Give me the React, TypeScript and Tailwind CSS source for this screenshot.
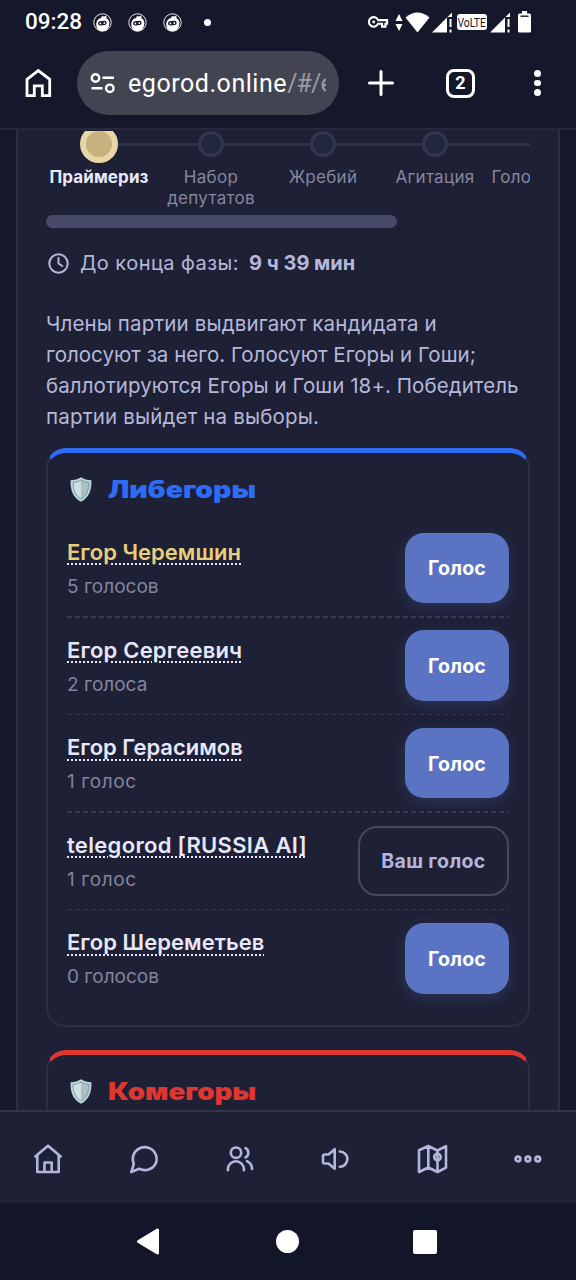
import { clsx } from "clsx";

// Types
interface Candidate {
  name: string;
  votes: string;
  leader?: boolean;
  mine?: boolean;
  nameClass: string;
  votesClass: string;
}

const candidates: Candidate[] = [
  { name: "Егор Черемшин", votes: "5 голосов", leader: true, nameClass: "tracking-[0.03px]", votesClass: "tracking-normal" },
  { name: "Егор Сергеевич", votes: "2 голоса", nameClass: "tracking-[0.18px]", votesClass: "tracking-normal" },
  { name: "Егор Герасимов", votes: "1 голос", nameClass: "tracking-normal", votesClass: "tracking-[0.6px]" },
  { name: "telegorod [RUSSIA AI]", votes: "1 голос", mine: true, nameClass: "tracking-[0.32px]", votesClass: "tracking-[0.6px]" },
  { name: "Егор Шереметьев", votes: "0 голосов", nameClass: "tracking-[0.05px]", votesClass: "tracking-normal" },
];

const steps = ["Праймериз", "Набор депутатов", "Жребий", "Агитация", "Голосование"];

const description = [
  { text: "Члены партии выдвигают кандидата и", className: "tracking-[0.13px]" },
  { text: "голосуют за него. Голосуют Егоры и Гоши;", className: "tracking-[0.03px]" },
  { text: "баллотируются Егоры и Гоши 18+. Победитель", className: "tracking-[0.07px]" },
  { text: "партии выйдет на выборы.", className: "tracking-[0.17px]" },
];

function BotIcon() {
  return (
    <svg width="19" height="19" viewBox="0 0 19 19">
      <circle cx="9.5" cy="9.5" r="8.7" fill="none" stroke="#fff" strokeWidth="0.9" />
      <path d="M3.3 12.2C3.1 7.6 5.6 5.3 8.2 5L8.8 3l2.4.5L13.2 2.5l.4 2.8c2.5 1.4 3.4 4.4 2.5 6.9-.5 3.4-2.9 5.9-6.3 6-3.7.1-6.3-2.4-6.5-6z" fill="#fff" />
      <rect x="5" y="8" width="8.6" height="4.2" rx="2" fill="#15172a" transform="rotate(-8 9.5 10)" />
      <circle cx="7.4" cy="10.5" r="0.9" fill="#fff" />
      <circle cx="11.3" cy="10" r="0.9" fill="#fff" />
    </svg>
  );
}

function SignalIcon() {
  return (
    <svg width="21" height="21" viewBox="0 0 21 21">
      <path d="M0 20.5L20 .5v4.5h-5v15.5z" fill="#fff" />
      <path d="M17.5 7h2v8h-2zM17.5 17.5h2v3h-2z" fill="#fff" />
    </svg>
  );
}

function StatusBar() {
  return (
    <div className="flex h-11 items-center pl-[25px] font-['Roboto',sans-serif] text-white">
      <span className="w-[68px] text-[22.5px] font-medium">09:28</span>
      <div className="flex gap-4">
        <BotIcon />
        <BotIcon />
        <BotIcon />
      </div>
      <span className="ml-[22px] size-[7px] rounded-full bg-white" />

      <div className="ml-[157px] flex items-center">
        <svg width="21" height="14" viewBox="0 0 22 14" fill="none" stroke="#fff" strokeWidth="2.2">
          <path d="M10.6 5H20v3.8h-1.7v3h-3.6v-3h-4.1A5 5 0 1 1 10.6 5z" />
          <circle cx="6" cy="7" r="1.1" fill="#fff" strokeWidth="1" />
        </svg>
        <svg className="ml-[6px]" width="8" height="17" viewBox="0 0 8 17" fill="#fff">
          <path d="M4 0l3.5 7h-7zM4 17L.5 10h7z" />
        </svg>
        <svg className="ml-[2px]" width="25" height="21" viewBox="0 0 25 21">
          <path d="M0.5 5.5Q12.5-4.3 24.5 5.5L12.5 20.5z" fill="#fff" />
        </svg>
        <div className="ml-[2px]">
          <SignalIcon />
        </div>
        <div className="ml-[4px] flex h-4 w-[30px] items-center justify-center rounded-[3px] bg-white">
          <span className="scale-x-[0.8] text-[13px] leading-none tracking-[-0.1px] whitespace-nowrap text-[#15172a]">VoLTE</span>
        </div>
        <div className="ml-[3px]">
          <SignalIcon />
        </div>
        <svg className="ml-[7px]" width="13" height="22" viewBox="0 0 13 22">
          <path d="M4 0h5v2.5h2.5Q13 2.5 13 4v16q0 1.5-1.5 1.5h-10Q0 21.5 0 20V4q0-1.5 1.5-1.5H4z" fill="#fff" />
          <path d="M2.5 5.2h8" stroke="#15172a" strokeWidth="1.4" />
        </svg>
      </div>
    </div>
  );
}

function BrowserBar() {
  return (
    <div className="flex h-[84px] items-center pb-[6px] text-white">
      <svg className="ml-[25px]" width="27" height="30" viewBox="0 0 27 30" fill="none" stroke="#fff" strokeWidth="2.8">
        <path d="M2 11.3L13.3 2.6 24.7 11.3V27.6H17.3V17.8H9.3V27.6H2z" />
      </svg>
      <div className="ml-[25px] flex h-16 w-[262px] items-center overflow-hidden rounded-full bg-[#434452] px-[13px]">
        <svg className="shrink-0" width="26" height="22" viewBox="0 0 26 22" fill="none" stroke="#fff" strokeWidth="2.4">
          <circle cx="5.5" cy="6" r="3.7" />
          <path d="M12.5 5.7H24M1.5 16.3H12.5" />
          <circle cx="19.8" cy="16.3" r="3.7" />
        </svg>
        <div className="ml-[12px] w-[198px] overflow-hidden pt-[2px] font-['Roboto',sans-serif] text-[25px] whitespace-nowrap">
          <span className="tracking-[0.55px]">egorod.online</span>
          <span className="tracking-[-0.9px] text-[#9a9ba6]">/#/e</span>
        </div>
      </div>
      <svg className="ml-[29px]" width="26" height="26" viewBox="0 0 26 26" stroke="#fff" strokeWidth="3" strokeLinecap="round">
        <path d="M13 1.5v23M1.5 13h23" />
      </svg>
      <div className="ml-[52px] flex size-[29px] items-center justify-center rounded-[8px] border-[3px] border-white font-['Roboto',sans-serif] text-[18px] leading-none font-bold">
        2
      </div>
      <div className="ml-[59px] flex flex-col gap-[3px]">
        <span className="size-[6.5px] rounded-full bg-white" />
        <span className="size-[6.5px] rounded-full bg-white" />
        <span className="size-[6.5px] rounded-full bg-white" />
      </div>
    </div>
  );
}

function Steps() {
  return (
    <div className="h-[84px] overflow-hidden">
      <div className="-ml-[3px] flex w-[560px]">
        {steps.map((step, i) => (
          <div key={step} className="w-28 shrink-0">
            <div className="flex h-[26px] items-center">
              <span className={clsx("h-[3px] flex-1", i > 0 && "bg-[#2e3048]")} />
              {i === 0 ? (
                <span className="size-[38px] shrink-0 rounded-full border-[6px] border-[#e8d6a8] bg-[#c8b17d]" />
              ) : (
                <span className="size-[26px] shrink-0 rounded-full border-[3.5px] border-[#33364d] bg-[#20273e]" />
              )}
              <span className="h-[3px] flex-1 bg-[#2e3048]" />
            </div>
            <p
              className={clsx(
                "mt-[10px] text-center text-[17px] leading-[21px]",
                i === 0 ? "font-bold tracking-[0.1px] text-[#e8eafc]" : "tracking-[0.3px] text-[#84879f]",
                i === 1 && "px-2"
              )}
            >
              {step}
            </p>
          </div>
        ))}
      </div>
    </div>
  );
}

function ShieldIcon() {
  return (
    <svg width="22" height="25" viewBox="0 0 22 25">
      <path d="M11 .3C8.2 2.2 4.2 3.2.6 3.2.1 12 2.5 20.5 11 24.7 19.5 20.5 21.9 12 21.4 3.2 17.8 3.2 13.8 2.2 11 .3z" fill="#b9d6da" />
      <path d="M11 3C8.7 4.4 5.8 5.2 3.1 5.4 3 12.5 5 18.6 11 21.9z" fill="#cfe0e4" />
      <path d="M11 3c2.3 1.4 5.2 2.2 7.9 2.4C19 12.5 17 18.6 11 21.9z" fill="#adc0c8" />
      <path d="M11 3C8.7 4.4 5.8 5.2 3.1 5.4 3 12.5 5 18.6 11 21.9 17 18.6 19 12.5 18.9 5.4 16.2 5.2 13.3 4.4 11 3z" fill="none" stroke="#6a9197" strokeWidth="0.8" />
    </svg>
  );
}

function PartyTitle({ name, className }: { name: string; className: string }) {
  return (
    <div className="flex h-[30px] items-center">
      <span className="ml-[3px] w-[38px] pt-px">
        <ShieldIcon />
      </span>
      <h2 className={clsx("origin-left pt-[2px] text-[24px] leading-none font-black whitespace-nowrap", className)}>{name}</h2>
    </div>
  );
}

function CandidateRow({ candidate, last }: { candidate: Candidate; last: boolean }) {
  return (
    <li className="h-[97.65px]">
      <div className="flex h-24 items-center justify-between">
        <div className="pt-[3px]">
          <p
            className={clsx(
              "text-[22px] leading-[30px] font-semibold whitespace-nowrap underline decoration-[#e6e8fa] decoration-dotted decoration-[2.25px] underline-offset-[4px]",
              candidate.leader ? "text-[#e8cf78]" : "text-[#e6e8fa]",
              candidate.nameClass
            )}
          >
            {candidate.name}
          </p>
          <p className={clsx("mt-[5px] text-[19px] leading-[30px] text-[#82859f]", candidate.votesClass)}>{candidate.votes}</p>
        </div>
        {candidate.mine ? (
          <button className="h-[70.5px] w-[151px] shrink-0 rounded-[19px] border-2 border-[#454860] pt-[2px] text-[19.5px] font-bold tracking-[0.35px] text-[#b3b6dc]">
            Ваш голос
          </button>
        ) : (
          <button className="h-[70.5px] w-26 shrink-0 rounded-[19px] bg-[#5b73c3] pt-[2px] text-[19.5px] font-bold tracking-[0.15px] text-white shadow-[0_4px_14px_rgba(91,115,195,0.24)]">
            Голос
          </button>
        )}
      </div>
      {!last && <div className="h-[1.65px] bg-[repeating-linear-gradient(90deg,#34374e_0_5px,transparent_5px_8px)]" />}
    </li>
  );
}

function NavIcon({ children }: { children: React.ReactNode }) {
  return (
    <button className="flex w-24 justify-center pt-[2px]">
      <svg
        width="32"
        height="32"
        viewBox="0 0 32 32"
        fill="none"
        stroke="#b3b6dc"
        strokeWidth="2.6"
        strokeLinecap="round"
        strokeLinejoin="round"
      >
        {children}
      </svg>
    </button>
  );
}

function BottomNav() {
  return (
    <nav className="flex h-[93px] shrink-0 items-center border-t-2 border-[#32354a] bg-[#1e2036]">
      <NavIcon>
        <path d="M3.3 13.5L16 2.8l12.7 10.7M5.3 12v17h21.4V12M12.5 29v-9.5h7.2V29" />
      </NavIcon>
      <NavIcon>
        <path d="M3.3 29l2.5-7.9C3 14.5 6 7.8 11.8 5.2c6.3-2.7 13.8.2 16.2 6.9 2.2 6.5-1.4 13-7.9 14.6-3.2.8-6.1.3-8.8-.9z" />
      </NavIcon>
      <NavIcon>
        <circle cx="12" cy="9.7" r="5.2" />
        <path d="M3.9 27.3v-1a8 8 0 0 1 16 0v1M21.5 5.2a5.2 5.2 0 0 1 0 9.3M23 18.2c3.2 1.3 5 4 5.1 7.8" />
      </NavIcon>
      <NavIcon>
        <path d="M4.5 11.5h4l6.2-5.3v19.6l-6.2-5.3h-4a1.500 1.500 0 0 1-1.500-1.500v-6a1.500 1.500 0 0 1 1.500-1.500zM19.8 8.500a7.600 7.600 0 0 1 0 15.200" />
      </NavIcon>
      <NavIcon>
        <path d="M3 7.2L12.3 3l9.2 4.5L30 3.2v21.5l-8.5 4.3-9.2-4.5L3 29zM12.3 3v21.5M21.5 7.5V29" />
        <circle cx="21.5" cy="14" r="3.3" />
      </NavIcon>
      <NavIcon>
        <circle cx="6" cy="16" r="2.4" />
        <circle cx="15.9" cy="16" r="2.4" />
        <circle cx="25.8" cy="16" r="2.4" />
      </NavIcon>
    </nav>
  );
}

export default function App() {
  return (
    <div className="flex h-[1280px] w-[576px] flex-col overflow-hidden bg-[#15172a] font-['Inter',sans-serif]">
      <header className="shrink-0">
        <StatusBar />
        <BrowserBar />
      </header>

      <main className="h-[982px] shrink-0 overflow-hidden border-t-2 border-[#26283c]">
        <div className="mx-4 h-[981px] border-x-2 border-[#2c2f45] bg-[#1e2036] px-7 pt-px">
          <Steps />
          <div className="h-[13px] w-[351px] rounded-full bg-[#474a68]" />

          {/* Phase timer */}
          <div className="mt-[20px] flex h-[30px] items-center text-[20px] text-[#b5b8d8]">
            <svg className="ml-[2px]" width="21" height="21" viewBox="0 0 21 21" fill="none" stroke="#b5b8d8" strokeWidth="2" strokeLinecap="round" strokeLinejoin="round">
              <circle cx="10.5" cy="10.5" r="9.2" />
              <path d="M10.5 5v5.5l3.8 2.5" />
            </svg>
            <span className="ml-[11px] w-[169px] tracking-[0.45px] whitespace-nowrap">До конца фазы:</span>
            <span className="font-bold whitespace-nowrap">9 ч 39 мин</span>
          </div>

          <div className="mt-[29.5px] text-[20.5px] leading-[31.1px] text-[#b5b8d8]">
            {description.map((line) => (
              <p key={line.text} className={clsx("whitespace-nowrap", line.className)}>
                {line.text}
              </p>
            ))}
          </div>

          {/* Parties */}
          <section className="mt-[16px] h-[579px] rounded-[20px] border-2 border-t-[5px] border-[#2b2e44] border-t-[#2f6cf6] px-[19px] pt-[21px]">
            <PartyTitle name="Либегоры" className="scale-x-[1.185] text-[#2f6cf6]" />
            <ul className="mt-[16px]">
              {candidates.map((candidate, i) => (
                <CandidateRow key={candidate.name} candidate={candidate} last={i === candidates.length - 1} />
              ))}
            </ul>
          </section>
          <section className="mt-[23px] h-[200px] rounded-[20px] border-2 border-t-[5px] border-[#2b2e44] border-t-[#de3730] px-[19px] pt-[21px]">
            <PartyTitle name="Комегоры" className="scale-x-[1.15] text-[#de3730]" />
          </section>
        </div>
      </main>

      <BottomNav />

      {/* Android navigation buttons */}
      <div className="flex h-[77px] shrink-0 items-center bg-[#131528]">
        <svg className="ml-[136px]" width="24" height="27" viewBox="0 0 24 27">
          <path d="M21.5 2v23L2.5 13.5z" fill="#fff" stroke="#fff" strokeWidth="3" strokeLinejoin="round" />
        </svg>
        <span className="ml-[116px] size-[23px] rounded-full bg-white" />
        <span className="ml-[114px] size-6 rounded-[2px] bg-white" />
      </div>
    </div>
  );
}
